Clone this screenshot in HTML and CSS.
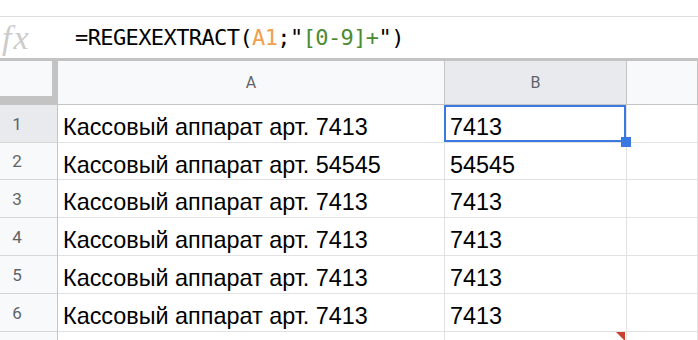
FILE: index.html
```
<!DOCTYPE html>
<html lang="ru">
<head>
<meta charset="utf-8">
<title>Sheet</title>
<link rel="stylesheet" href="styles.css">
</head>
<body>
<div class="formula-bar">
  <div class="fx">fx</div>
  <div class="formula">=REGEXEXTRACT(<span class="ref">A1</span>;"<span class="str">[0-9]+</span>")</div>
</div>
<div class="grid">
  <div class="corner"></div>
  <div class="col-head">A</div>
  <div class="col-head selected">B</div>
  <div class="col-head"></div>

  <div class="row-head selected">1</div>
  <div class="cell">Кассовый аппарат арт. 7413</div>
  <div class="cell active">7413<span class="handle"></span></div>
  <div class="cell"></div>

  <div class="row-head">2</div>
  <div class="cell">Кассовый аппарат арт. 54545</div>
  <div class="cell">54545</div>
  <div class="cell"></div>

  <div class="row-head">3</div>
  <div class="cell">Кассовый аппарат арт. 7413</div>
  <div class="cell">7413</div>
  <div class="cell"></div>

  <div class="row-head">4</div>
  <div class="cell">Кассовый аппарат арт. 7413</div>
  <div class="cell">7413</div>
  <div class="cell"></div>

  <div class="row-head">5</div>
  <div class="cell">Кассовый аппарат арт. 7413</div>
  <div class="cell">7413</div>
  <div class="cell"></div>

  <div class="row-head">6</div>
  <div class="cell">Кассовый аппарат арт. 7413</div>
  <div class="cell">7413</div>
  <div class="cell"></div>

  <div class="row-head"></div>
  <div class="cell"></div>
  <div class="cell note"></div>
  <div class="cell"></div>
</div>
</body>
</html>
```
FILE: styles.css
```
* { box-sizing: border-box; }
html, body {
  margin: 0;
  padding: 0;
  background: #fff;
  width: 698px;
  height: 340px;
  overflow: hidden;
}
.formula-bar {
  margin-top: 16px;
  height: 45px;
  border-top: 1px solid #dcdcdc;
  border-bottom: 3px solid #c3c3c3;
  display: flex;
  align-items: center;
}
.fx {
  width: 75px;
  padding-left: 2px;
  font-family: "Liberation Serif", serif;
  font-style: italic;
  font-size: 34px;
  letter-spacing: 2px;
  color: #cbcbcb;
  line-height: 40px;
}
.formula {
  font-family: "DejaVu Sans Mono", monospace;
  font-size: 22px;
  letter-spacing: -0.6px;
  color: #000;
  line-height: 36px;
  display: flex;
}
.formula .ref { color: #f0a04a; }
.formula .str { color: #4a8b33; }

.grid {
  display: grid;
  grid-template-columns: 58px 387px 182px 71px;
  grid-template-rows: 44px 38px 37px 38px 38px 38px 38px 38px;
}
.corner {
  background: #f8f9fa;
  border-right: 6px solid #c3c3c3;
  border-bottom: 9px solid #c3c3c3;
}
.col-head {
  background: #f8f9fa;
  border-right: 1px solid #c4c4c4;
  border-bottom: 1px solid #c4c4c4;
  font-family: Roboto, "Liberation Sans", sans-serif;
  font-size: 16px;
  color: #5f6368;
  display: flex;
  align-items: center;
  justify-content: center;
}
.col-head.selected { background: #e8eaed; }
.row-head {
  background: #f8f9fa;
  border-right: 1px solid #c4c4c4;
  border-bottom: 1px solid #d6d6d6;
  font-family: Roboto, "Liberation Sans", sans-serif;
  font-size: 17px;
  color: #5f6368;
  display: flex;
  align-items: center;
  justify-content: center;
  padding-right: 23px;
}
.row-head.selected { background: #e8eaed; }
.cell {
  position: relative;
  border-right: 1px solid #e2e2e2;
  border-bottom: 1px solid #e2e2e2;
  font-family: "Liberation Sans", Arial, sans-serif;
  font-size: 23.4px;
  color: #000;
  line-height: 37px;
  padding-top: 4px;
  padding-left: 5px;
  white-space: nowrap;
}
.cell.active::after {
  content: "";
  position: absolute;
  left: -1px;
  top: 0;
  right: 0;
  bottom: 0;
  border: 2px solid #3b78e0;
}
.handle {
  position: absolute;
  right: -5px;
  bottom: -5px;
  width: 10px;
  height: 10px;
  background: #3b78e0;
  z-index: 2;
}
.cell.note::after {
  content: "";
  position: absolute;
  top: 0;
  right: 1px;
  width: 0;
  height: 0;
  border-top: 9px solid #c8432f;
  border-left: 9px solid transparent;
}
```
